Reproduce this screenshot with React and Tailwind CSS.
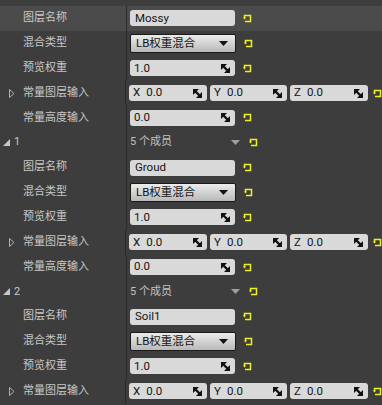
const font = { fontFamily: 'Roboto, "Noto Sans CJK SC", sans-serif' }

function ResetIcon() {
  return (
    <svg width="9" height="9" viewBox="0 0 9 9" className="shrink-0">
      <path d="M1.5 4.5 V1.5 H7.5 V7.5 H2" stroke="#f0f020" strokeWidth="1.5" fill="none" />
      <path d="M0 3.5 H3 L1.5 5.5 Z" fill="#f0f020" />
    </svg>
  )
}

function SpinIcon() {
  return (
    <svg width="9" height="9" viewBox="0 0 9 9" className="shrink-0">
      <path d="M0 0 H6 L0 6 Z" fill="#111" />
      <path d="M9 9 H3 L9 3 Z" fill="#111" />
      <path d="M2 2 L7 7" stroke="#111" strokeWidth="2.4" />
    </svg>
  )
}

function Row({ label, expand, highlight, children }) {
  return (
    <div className={`flex h-[24.87px] items-center ${highlight ? 'bg-[#4b4b4b]' : ''}`}>
      <div className="flex w-[126px] items-center h-full text-[11px] text-[#c8c8c8]">
        <span className="w-[23px] flex justify-end pr-[8px]">
          {expand && (
            <svg width="6" height="9" viewBox="0 0 6 9">
              <path d="M0.5 0.5 L5 4.5 L0.5 8.5 Z" stroke="#b0b0b0" fill="none" />
            </svg>
          )}
        </span>
        <span>{label}</span>
      </div>
      <div className="w-[1px] h-full bg-[#2a2a2a]" />
      <div className="flex items-center gap-[8px] pl-[3px]">{children}</div>
    </div>
  )
}

function TextBox({ value }) {
  return (
    <div className="w-[105px] h-[16px] rounded-[3px] bg-[#d9d9d9] flex items-center px-[5px] text-[11.5px] text-[#141414]">
      {value}
    </div>
  )
}

function Combo() {
  return (
    <div className="w-[106px] h-[19px] rounded-[2px] border border-[#1a1a1a] bg-gradient-to-b from-[#ececec] to-[#b9b9b9] flex items-center justify-between pl-[5px] pr-[7px] text-[11.5px] text-[#141414]">
      <span>LB权重混合</span>
      <svg width="9" height="5" viewBox="0 0 9 5">
        <path d="M0 0 H9 L4.5 5 Z" fill="#111" />
      </svg>
    </div>
  )
}

function NumBox({ value, prefix, width = 'w-[105px]' }) {
  return (
    <div className={`${width} h-[16px] rounded-[3px] bg-[#d9d9d9] flex items-center justify-between pl-[4px] pr-[5px] text-[11.5px] text-[#141414]`}>
      <span>
        {prefix && <span className="mr-[6px]">{prefix}</span>}
        {value}
      </span>
      <SpinIcon />
    </div>
  )
}

function Vector() {
  return (
    <>
      <div className="flex gap-[3px]">
        <NumBox prefix="X" value="0.0" width="w-[78px]" />
        <NumBox prefix="Y" value="0.0" width="w-[77px]" />
        <NumBox prefix="Z" value="0.0" width="w-[78px]" />
      </div>
      <span className="-ml-[3px]"><ResetIcon /></span>
    </>
  )
}

function Layer({ name, first, last }) {
  return (
    <>
      <Row label="图层名称" highlight={first}>
        <TextBox value={name} />
        <ResetIcon />
      </Row>
      <Row label="混合类型">
        <Combo />
        <ResetIcon />
      </Row>
      <Row label="预览权重">
        <NumBox value="1.0" />
        <ResetIcon />
      </Row>
      <Row label="常量图层输入" expand>
        <Vector />
      </Row>
      {!last && (
        <Row label="常量高度输入">
          <NumBox value="0.0" />
          <ResetIcon />
        </Row>
      )}
    </>
  )
}

function Group({ index }) {
  return (
    <div className="flex h-[24.87px] items-center">
      <div className="flex w-[126px] items-center h-full text-[11px] text-[#c8c8c8] pl-[3px]">
        <svg width="7" height="7" viewBox="0 0 7 7" className="mr-[4px]">
          <path d="M7 0 V7 H0 Z" fill="#c8c8c8" />
        </svg>
        <span>{index}</span>
      </div>
      <div className="w-[1px] h-full bg-[#2a2a2a]" />
      <div className="flex items-center pl-[3px] text-[11px] text-[#c0c0c0]">
        <span className="w-[101px]">5 个成员</span>
        <svg width="9" height="5" viewBox="0 0 9 5" className="mr-[9px]">
          <path d="M0 0 H9 L4.5 5 Z" fill="#a0a0a0" />
        </svg>
        <ResetIcon />
      </div>
    </div>
  )
}

export default function App() {
  return (
    <div className="w-[382px] h-[405px] bg-[#3d3d3d] overflow-hidden pt-[6px]" style={font}>
      <Layer name="Mossy" first />
      <Group index="1" />
      <Layer name="Groud" />
      <Group index="2" />
      <Layer name="Soil1" last />
    </div>
  )
}
